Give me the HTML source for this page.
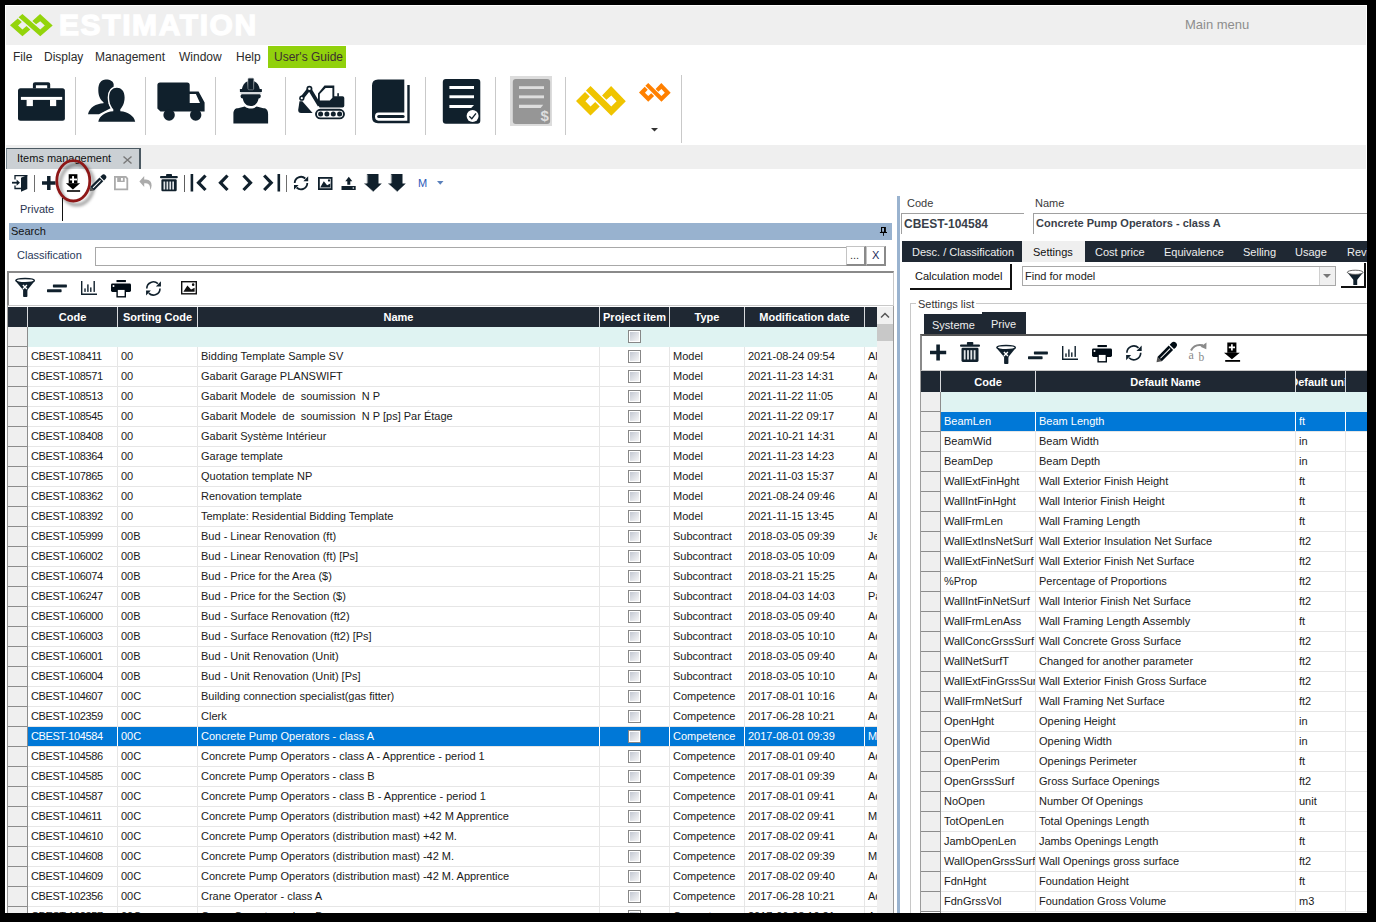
<!DOCTYPE html>
<html><head><meta charset="utf-8"><title>Estimation</title>
<style>
*{box-sizing:border-box;margin:0;padding:0}
html,body{width:1376px;height:922px;overflow:hidden;background:#000;font-family:"Liberation Sans", sans-serif;font-size:11px;color:#1a1a1a}
.ab{position:absolute}
.t{position:absolute;white-space:nowrap;line-height:1}
svg{position:absolute;overflow:visible}
.hd{position:absolute;background:#1f2833;color:#fff;font-weight:bold;font-size:11px}
.hc{position:absolute;top:0;height:100%;display:flex;justify-content:center;line-height:20px;overflow:hidden;white-space:nowrap;border-left:1px solid #d8dadd}
.row{position:absolute;height:20px;border-bottom:1px solid #e6e6e6;background:#fff}
.c{position:absolute;top:0;height:19px;line-height:19px;overflow:hidden;white-space:pre;padding-left:3px;border-left:1px solid #e6e6e6}
.rh{position:absolute;background:#efefef;border-bottom:1px solid #8c8c8c;border-right:1px solid #8c8c8c}
.sel{background:#0078d7;color:#fff}
.sel .c{border-left-color:#fff}
.cb{position:absolute;width:13px;height:13px;border:1px solid #878787;padding:1px;background:linear-gradient(135deg,#c4c9d3,#f6f6f6) content-box,#fff}
</style></head><body>

<div class="ab" style="left:5px;top:5px;width:1362px;height:908px;background:#fff"></div>
<div class="ab" style="left:6px;top:6px;width:1360px;height:39px;background:#efefef"></div>
<svg style="left:9.8px;top:14px" width="42.7" height="22.3" viewBox="55 50 1270 760" preserveAspectRatio="none"><path fill="#93d40b" d="M285 200L55 430L425 805L660 575L545 460L425 575L295 440L405 320Z M425 50L955 575L1090 440L955 295L830 400L720 290L950 50L1325 440L955 810L310 165Z"/></svg>
<div class="t" style="left:59px;top:10px;font-size:30px;font-weight:bold;color:#fff;letter-spacing:1.6px;-webkit-text-stroke:1.3px #fff">ESTIMATION</div>
<div class="t" style="left:1185px;top:18px;font-size:13px;color:#8d8d8d">Main menu</div>
<div class="t" style="left:13px;top:51px;font-size:12px;color:#2b2b2b">File</div>
<div class="t" style="left:44px;top:51px;font-size:12px;color:#2b2b2b">Display</div>
<div class="t" style="left:95px;top:51px;font-size:12px;color:#2b2b2b">Management</div>
<div class="t" style="left:179px;top:51px;font-size:12px;color:#2b2b2b">Window</div>
<div class="t" style="left:236px;top:51px;font-size:12px;color:#2b2b2b">Help</div>
<div class="ab" style="left:268px;top:46px;width:78px;height:22px;background:#91d10c"></div>
<div class="t" style="left:274px;top:51px;font-size:12px;color:#3d3030">User's Guide</div>
<div class="ab" style="left:75px;top:77px;width:1px;height:58px;background:#c9c9c9"></div>
<div class="ab" style="left:145px;top:77px;width:1px;height:58px;background:#c9c9c9"></div>
<div class="ab" style="left:215px;top:77px;width:1px;height:58px;background:#c9c9c9"></div>
<div class="ab" style="left:285px;top:77px;width:1px;height:58px;background:#c9c9c9"></div>
<div class="ab" style="left:355px;top:77px;width:1px;height:58px;background:#c9c9c9"></div>
<div class="ab" style="left:425px;top:77px;width:1px;height:58px;background:#c9c9c9"></div>
<div class="ab" style="left:495px;top:77px;width:1px;height:58px;background:#c9c9c9"></div>
<div class="ab" style="left:565px;top:77px;width:1px;height:58px;background:#c9c9c9"></div>
<div class="ab" style="left:681px;top:75px;width:1px;height:68px;background:#c9c9c9"></div>
<svg style="left:12px;top:76px" width="60" height="50" viewBox="0 0 60 50"><path fill="#10202c" d="M8.5 12.2H50.4Q52.9 12.2 52.9 14.7V42.2Q52.9 44.7 50.4 44.7H8.5Q6 44.7 6 42.2V14.7Q6 12.2 8.5 12.2Z"/>
<path fill="#10202c" fill-rule="evenodd" d="M23 6.2H36.2Q38.2 6.2 38.2 8.2V12.5H20.9V8.2Q20.9 6.2 23 6.2Z M23.9 9.2V12.5H35.2V9.2Z"/>
<rect x="8.9" y="20.9" width="41.3" height="3" fill="#fff"/>
<rect x="14.6" y="23.5" width="6.3" height="6.6" fill="#fff"/>
<rect x="38" y="23.5" width="6.2" height="6.6" fill="#fff"/></svg>
<svg style="left:82px;top:76px" width="60" height="50" viewBox="0 0 60 50"><path fill="#10202c" d="M23.8 3.5C28.5 3.5 31.5 5.5 31.7 8.5L31 22C29.5 24.5 28 26 26.5 26.8V27.3L29 32L17 38.2H6C7.5 31.5 14 27.7 21.5 27.3V26.2C18.5 24 16.3 20 16.3 14C16.3 7 19.3 3.5 23.8 3.5Z"/>
<g stroke="#fff" stroke-width="2.8" paint-order="stroke" fill="#10202c">
<path d="M34.85 11.7C39.4 11.7 42.6 15 42.6 21.5C42.6 27.5 40 31.5 38.3 33.2V35.2C46 35.8 52 39.5 53.2 45.8H16.3C17.5 39.5 23.5 35.8 31.3 35.2V33.2C29.6 31.5 27.1 27.5 27.1 21.5C27.1 15 30.3 11.7 34.85 11.7Z"/></g></svg>
<svg style="left:152px;top:76px" width="60" height="50" viewBox="0 0 60 50"><path fill="#10202c" fill-rule="evenodd" d="M8 6.5H35.2Q37.7 6.5 37.7 9V15.5H46.6L52.6 26.6V35.5H8.5L5.4 32.5V9Q5.4 6.5 8 6.5Z M37.7 17.9V27.1H48L43.9 17.9Z"/>
<circle cx="17.1" cy="39" r="5.7" fill="#10202c"/><circle cx="43.7" cy="39" r="5.7" fill="#10202c"/></svg>
<svg style="left:222px;top:76px" width="60" height="50" viewBox="0 0 60 50"><path fill="#10202c" d="M19.8 13.5C20.5 9.5 22.5 6.5 25.5 5.3L26 13.5H31.7L32.2 5.3C35.2 6.5 37.2 9.5 37.9 13.5Z"/>
<rect x="17.9" y="13" width="22" height="3" rx="0.5" fill="#10202c"/>
<rect x="26" y="2.2" width="5.7" height="11.6" rx="1" fill="#10202c" stroke="#8c9399" stroke-width="0.6"/>
<rect x="18.5" y="16.1" width="20.8" height="1.7" fill="#cfd3d6"/>
<path fill="#10202c" d="M19.8 18.2H37.6Q38.9 18.5 38.8 20.2Q38.6 22.4 36.6 22.6C35.8 27.4 32.8 30.1 28.7 30.1C24.6 30.1 21.6 27.4 20.8 22.6Q18.6 22.4 18.5 20.2Q18.6 18.5 19.8 18.2Z"/>
<path fill="#10202c" d="M11.4 47.5V38C11.4 34 13 32.4 16 32.3L22.8 30.6C24.5 32 26.5 32.6 28.7 32.6C30.9 32.6 32.9 32 34.6 30.6L41.4 32.3C44.4 32.4 46.1 34 46.1 38V47.5Z"/></svg>
<svg style="left:292px;top:76px" width="60" height="50" viewBox="0 0 60 50"><path fill="#10202c" fill-rule="evenodd" d="M32.5 9.5H42.3V20.2H50.5Q52.3 20.2 52.3 22V29.8Q52.3 31.5 50.5 31.5H27.5L26 28V17.4Z M33.6 11.9L27.8 17.9V24.4H37.8L40.4 21.7V11.9Z"/>
<rect x="45.3" y="17.2" width="1.6" height="3.5" fill="#10202c"/>
<path d="M27.5 29.5L17.4 12.7L9.8 22.2" stroke="#10202c" stroke-width="3.6" fill="none" stroke-linejoin="round"/>
<circle cx="17.4" cy="12.7" r="3" fill="#10202c"/><circle cx="17.4" cy="12.7" r="1.3" fill="#fff"/>
<circle cx="9.8" cy="22.2" r="2.6" fill="#10202c"/><circle cx="9.8" cy="22.2" r="1.1" fill="#fff"/>
<path fill="#10202c" d="M7.5 25.3H10.3L20.6 36.9H9Q6.2 36.9 6.2 34Z"/>
<rect x="24" y="33.8" width="28" height="8.6" rx="4.3" fill="none" stroke="#10202c" stroke-width="1.9"/>
<circle cx="28.6" cy="38.1" r="2.5" fill="#10202c"/><circle cx="34.9" cy="38.1" r="2.5" fill="#10202c"/><circle cx="41.3" cy="38.1" r="2.5" fill="#10202c"/><circle cx="47.6" cy="38.1" r="2.5" fill="#10202c"/></svg>
<svg style="left:362px;top:76px" width="60" height="50" viewBox="0 0 60 50"><path fill="#10202c" d="M16 3.5H42.3V36.4H16.5Q13 36.4 13 40.6Q13 44.7 16.5 44.7H45.3V8.9H47.7V47.2H16Q10 47.2 10 41V9.5Q10 3.5 16 3.5Z"/>
<rect x="15.2" y="39" width="27.4" height="3" rx="1.5" fill="#10202c"/></svg>
<svg style="left:432px;top:76px" width="60" height="50" viewBox="0 0 60 50"><rect x="10.8" y="3" width="37.5" height="44.7" rx="3" fill="#10202c"/>
<rect x="17.4" y="10" width="24.6" height="3" fill="#fff"/>
<rect x="17.4" y="19.3" width="24.6" height="2.9" fill="#fff"/>
<path d="M17.4 29H42L39.2 32H17.4Z" fill="#fff"/>
<circle cx="40.6" cy="40.1" r="6" fill="#fff"/>
<path d="M37.3 40.3L39.8 42.7L44 37.3" stroke="#10202c" stroke-width="1.3" fill="none"/></svg>
<div class="ab" style="left:510px;top:76px;width:42px;height:50px;background:#dcdcdc"></div>
<svg style="left:502px;top:72px" width="60" height="58" viewBox="0 0 60 58"><rect x="10.8" y="6.9" width="37.3" height="45" rx="3" fill="#969696"/>
<rect x="17" y="14.2" width="25" height="2.8" fill="#dedede"/>
<rect x="17" y="23.4" width="25" height="2.9" fill="#dedede"/>
<path d="M17 32.8H41.2L38.7 36H17Z" fill="#dedede"/>
<text x="38.5" y="48.5" font-family="Liberation Sans" font-size="15" font-weight="bold" fill="#dedede">$</text></svg>
<svg style="left:576.2px;top:86px" width="49.8" height="29.8" viewBox="55 50 1270 760" preserveAspectRatio="none"><path fill="#efc400" d="M285 200L55 430L425 805L660 575L545 460L425 575L295 440L405 320Z M425 50L955 575L1090 440L955 295L830 400L720 290L950 50L1325 440L955 810L310 165Z"/></svg>
<svg style="left:639.3px;top:82.5px" width="31.7" height="18.8" viewBox="55 50 1270 760" preserveAspectRatio="none"><path fill="#ff8000" d="M285 200L55 430L425 805L660 575L545 460L425 575L295 440L405 320Z M425 50L955 575L1090 440L955 295L830 400L720 290L950 50L1325 440L955 810L310 165Z"/></svg>
<svg style="left:651px;top:128px" width="8" height="4" viewBox="0 0 8 4"><path d="M0 0H7L3.5 3.5Z" fill="#333"/></svg>
<div class="ab" style="left:6px;top:145px;width:1360px;height:24px;background:#efefef"></div>
<div class="ab" style="left:6px;top:148px;width:135px;height:21px;background:#cbd0d4;border-top:1px solid #4b5962;border-right:2px solid #4b5962;border-left:1px solid #7c8a93"></div>
<div class="t" style="left:17px;top:153px;font-size:11px;color:#111">Items management</div>
<svg style="left:123px;top:156px" width="9" height="8" viewBox="0 0 9 8"><path d="M0.5 0.5L8.5 7.5M8.5 0.5L0.5 7.5" stroke="#787878" stroke-width="1.4"/></svg>
<svg style="left:8px;top:170px" width="24" height="26" viewBox="0 0 24 26"><path d="M7 9.5V5.6H19.3 M7 15.5V18.5H13" stroke="#10202c" stroke-width="1.3" fill="none"/>
<path d="M13 7.8L19.3 5.1V19.1L13 21.8Z" fill="#10202c"/>
<path d="M4 12.7H9.5" stroke="#10202c" stroke-width="1.8"/><path d="M8.6 9.6L12 12.7L8.6 15.8Z" fill="#10202c"/></svg>
<div class="ab" style="left:34px;top:175px;width:1px;height:17px;background:#6e6e6e"></div>
<svg style="left:42px;top:176px" width="14" height="14" viewBox="0 0 14 14"><path d="M0 7H13.6 M6.8 0V14.1" stroke="#10202c" stroke-width="3.5"/></svg>
<svg style="left:56px;top:170px" width="34" height="26" viewBox="0 0 34 26"><rect x="12.7" y="4.2" width="8.7" height="9.2" fill="#000"/>
<rect x="13.8" y="8.6" width="7.2" height="1.8" fill="#fff"/><rect x="16.1" y="6.1" width="1.9" height="6.9" fill="#fff"/>
<path d="M9.9 13.2H24.1L16.9 19.4Z" fill="#000"/>
<rect x="10.9" y="20.2" width="13.2" height="1.6" fill="#000"/></svg>
<svg style="left:50px;top:154px" width="50" height="56" viewBox="0 0 50 56"><defs><filter id="sh" x="-30%" y="-30%" width="160%" height="160%"><feGaussianBlur stdDeviation="1.6"/></filter></defs><ellipse cx="24.6" cy="28.3" rx="16.7" ry="20.3" fill="none" stroke="#000" stroke-opacity="0.35" stroke-width="3.5" filter="url(#sh)" transform="translate(2.2 2.2)"/><ellipse cx="23.3" cy="26.8" rx="16.5" ry="20.2" fill="none" stroke="#8e1717" stroke-width="2.8"/></svg>
<svg style="left:84px;top:170px" width="30" height="30" viewBox="0 0 30 30"><g transform="translate(5.599999999999994 21.19999999999999) rotate(-45)">
<path d="M0 0L3.6 -2.65V2.65Z" fill="#555"/>
<rect x="3.6" y="-2.65" width="13.049999999999999" height="5.3" fill="#10202c"/>
<rect x="4.8" y="-0.5" width="10.649999999999999" height="1" fill="#fff"/>
<path d="M17.775000000000002 -2.65H19.85A2.65 2.65 0 0 1 19.85 2.65H17.775000000000002Z" fill="#10202c"/>
</g></svg>
<svg style="left:113px;top:175px" width="17" height="17" viewBox="0 0 17 17"><path d="M1.9 1.9H12.7L14.3 3.5V14.3H1.9Z" fill="none" stroke="#ababab" stroke-width="1.8"/>
<rect x="4.2" y="1" width="7.5" height="6" fill="#ababab"/><rect x="8" y="3" width="1.9" height="2.7" fill="#fff"/></svg>
<svg style="left:139px;top:176px" width="14" height="14" viewBox="0 0 14 14"><path d="M5.2 3.5H7Q12.6 3.8 12.6 9.5Q12.4 12.2 11.2 14Q11.5 7.6 7 7.3H5.2V11L0.4 5.5L5.2 0Z" fill="#ababab"/></svg>
<svg style="left:160px;top:174px" width="18" height="18" viewBox="0 0 18 18"><rect x="0" y="2.1" width="17.8" height="2.2" rx="1" fill="#10202c"/>
<rect x="6.1" y="0" width="5.9" height="3" rx="0.8" fill="#10202c"/>
<rect x="1.4" y="5.3" width="15.3" height="12" rx="1.2" fill="#10202c"/>
<rect x="3.5" y="7.5" width="1.7" height="8" fill="#dfe3e6"/><rect x="6.5" y="7.5" width="1.7" height="8" fill="#dfe3e6"/><rect x="9.4" y="7.5" width="1.7" height="8" fill="#dfe3e6"/><rect x="12.3" y="7.5" width="1.7" height="8" fill="#dfe3e6"/></svg>
<div class="ab" style="left:184px;top:175px;width:1px;height:17px;background:#5e5e5e"></div>
<svg style="left:188px;top:172px" width="96" height="22" viewBox="0 0 96 22"><rect x="2.6" y="2" width="2.6" height="17.5" fill="#10202c"/>
<path d="M17.5 3.5L10.5 10.8L17.5 18" stroke="#10202c" stroke-width="3.2" fill="none"/>
<path d="M39.5 3.5L32.5 10.8L39.5 18" stroke="#10202c" stroke-width="3.2" fill="none"/>
<path d="M55.5 3.5L62.5 10.8L55.5 18" stroke="#10202c" stroke-width="3.2" fill="none"/>
<path d="M76.2 3.5L83.2 10.8L76.2 18" stroke="#10202c" stroke-width="3.2" fill="none"/>
<rect x="89.5" y="2" width="2.6" height="17.5" fill="#10202c"/></svg>
<div class="ab" style="left:286px;top:175px;width:1px;height:17px;background:#6e6e6e"></div>
<svg style="left:293.2px;top:175px" width="16.0" height="16.0" viewBox="0 0 16.0 16.0"><g transform="scale(1.0)"><path d="M1.7 8A6.3 6.3 0 0 1 12.3 3.5 M14.3 8A6.3 6.3 0 0 1 3.6 12.5" stroke="#10202c" stroke-width="1.8" fill="none"/>
<path d="M15.2 1.3V6.3H10.4Z" fill="#10202c"/><path d="M1 10H5.6L1 14.8Z" fill="#10202c"/></g></svg>
<svg style="left:318px;top:177px" width="14.5" height="13" viewBox="0 0 14.5 13"><rect x="0.9" y="0.9" width="12.7" height="11.2" fill="#fff" stroke="#10202c" stroke-width="1.8"/>
<path d="M2.175 10.4L5.800000000000001 4.29L9.135 8.19L12.325 6.5V10.4Z" fill="#10202c"/>
<circle cx="11.02" cy="3.5100000000000002" r="1.16" fill="#10202c"/></svg>
<svg style="left:341px;top:175px" width="16" height="16" viewBox="0 0 16 16"><path d="M4.3 6.2L7.8 1.8L11.3 6.2H9.3V9.8H6.3V6.2Z" fill="#10202c"/>
<rect x="0.5" y="11" width="14.2" height="4" fill="#10202c"/><circle cx="12.3" cy="13" r="0.8" fill="#fff"/></svg>
<svg style="left:364px;top:174px" width="20" height="20" viewBox="0 0 20 20"><path d="M2.9 0H14.5V9.4H17.8L9.1 17.8L0 9.4H2.9Z" fill="#10202c"/>
<path d="M3.6 0.5V9.3 M0.9 10.4L9 17.4" stroke="#fff" stroke-width="0.6" opacity="0.85"/></svg>
<svg style="left:388px;top:174px" width="20" height="20" viewBox="0 0 20 20"><path d="M2.9 0H14.5V9.4H17.8L9.1 17.8L0 9.4H2.9Z" fill="#10202c"/>
<path d="M3.6 0.5V9.3 M0.9 10.4L9 17.4" stroke="#fff" stroke-width="0.6" opacity="0.85"/></svg>
<div class="t" style="left:418px;top:178px;font-size:11px;color:#2c58b8">M</div>
<svg style="left:437px;top:181px" width="7" height="4" viewBox="0 0 7 4"><path d="M0 0H6.5L3.25 3.8Z" fill="#5a80bb"/></svg>
<div class="t" style="left:20px;top:204px;font-size:11px;color:#2a3550">Private</div>
<div class="ab" style="left:62px;top:198px;width:1px;height:23px;background:#111"></div>
<div class="ab" style="left:9px;top:223px;width:883px;height:17px;background:#98b2cf"></div>
<div class="t" style="left:11px;top:226px;font-size:11px;color:#111">Search</div>
<svg style="left:879px;top:226px" width="9" height="11" viewBox="0 0 9 11"><path d="M2 1H6.9V6.2H2Z M3.1 1.9V5.8H5V1.9Z" fill="#000" fill-rule="evenodd"/>
<rect x="0.9" y="6" width="7.1" height="1" fill="#000"/><rect x="4.1" y="6.8" width="0.9" height="3" fill="#000"/></svg>
<div class="t" style="left:17px;top:250px;font-size:11px;color:#2a3a5a">Classification</div>
<div class="ab" style="left:95px;top:247px;width:752px;height:19px;border:1px solid #a8a8a8;border-right:none;background:#fff"></div>
<div class="ab" style="left:846px;top:246px;width:20px;height:20px;border:1px solid #c4c4c4;border-right:2px solid #8a8a8a;border-bottom:2px solid #8a8a8a;background:#fff"></div>
<div class="t" style="left:850px;top:250px;font-size:11px;color:#333">...</div>
<div class="ab" style="left:866px;top:246px;width:20px;height:20px;border:1px solid #c4c4c4;border-right:2px solid #8a8a8a;border-bottom:2px solid #8a8a8a;background:#fff"></div>
<div class="t" style="left:872px;top:250px;font-size:11px;color:#1a2a5a">X</div>
<div class="ab" style="left:7px;top:271px;width:887px;height:35px;border:1px solid #c8c8c8;border-top:2px solid #8a8a8a;border-left:2px solid #8a8a8a"></div>
<svg style="left:15px;top:274px" width="22" height="22" viewBox="0 0 22 22"><path d="M5.1 6.6L13.1 16H17.4L25.1 6.6Z" fill="#10202c" transform="translate(-5 0)"/>
<ellipse cx="10.1" cy="6.6" rx="9.2" ry="2.1" fill="#fff" stroke="#10202c" stroke-width="1.4"/>
<rect x="8.1" y="15.5" width="4.3" height="7.5" rx="0.8" fill="#10202c"/>
<path d="M7.9 10.9L11.9 14.9 M11.9 10.9L7.9 14.9" stroke="#fff" stroke-width="1.4"/></svg>
<svg style="left:47px;top:278px" width="22" height="22" viewBox="0 0 22 22"><rect x="5.9" y="6.5" width="14" height="2.9" rx="0.6" fill="#10202c"/><rect x="0" y="11.3" width="14.6" height="2.9" rx="0.6" fill="#10202c"/></svg>
<svg style="left:81px;top:281px" width="18" height="16" viewBox="0 0 18 16"><path d="M0.7 0V13.2H16" stroke="#10202c" stroke-width="1.4" fill="none"/>
<rect x="3.3" y="7.4" width="1.4" height="3.5" fill="#10202c"/><rect x="6.2" y="3.4" width="1.4" height="7.5" fill="#10202c"/>
<rect x="9.1" y="6.4" width="1.4" height="4.5" fill="#10202c"/><rect x="12.5" y="0" width="1.4" height="10.9" fill="#10202c"/></svg>
<svg style="left:111px;top:279.5px" width="22" height="20" viewBox="0 0 22 20"><rect x="5.5" y="0" width="9.4" height="2.1" fill="#000b14"/>
<rect x="0" y="3.6" width="20" height="8.3" rx="1.4" fill="#000b14"/>
<circle cx="2.5" cy="6.1" r="1" fill="#fff"/>
<rect x="6.1" y="9.2" width="8.2" height="7.6" fill="#fff" stroke="#000b14" stroke-width="1.4"/></svg>
<svg style="left:144.5px;top:279.5px" width="16.8" height="16.8" viewBox="0 0 16.8 16.8"><g transform="scale(1.05)"><path d="M1.7 8A6.3 6.3 0 0 1 12.3 3.5 M14.3 8A6.3 6.3 0 0 1 3.6 12.5" stroke="#10202c" stroke-width="1.5" fill="none"/>
<path d="M15.2 1.3V6.3H10.4Z" fill="#10202c"/><path d="M1 10H5.6L1 14.8Z" fill="#10202c"/></g></svg>
<svg style="left:181px;top:281px" width="16" height="13.5" viewBox="0 0 16 13.5"><rect x="0.7" y="0.7" width="14.6" height="12.1" fill="#fff" stroke="#111" stroke-width="1.4"/>
<path d="M2.4 10.8L6.4 4.455L10.08 8.505L13.6 6.75V10.8Z" fill="#111"/>
<circle cx="12.16" cy="3.6450000000000005" r="1.28" fill="#111"/></svg>
<div class="ab" style="left:7px;top:306px;width:887px;height:607px;border-left:1px solid #9a9a9a;border-right:1px solid #9a9a9a"></div>
<div class="hd" style="left:8px;top:307px;width:869px;height:20px">
<div class="hc" style="left:19px;width:90px">Code</div>
<div class="hc" style="left:109px;width:80px">Sorting Code</div>
<div class="hc" style="left:189px;width:402px">Name</div>
<div class="hc" style="left:591px;width:70px">Project item</div>
<div class="hc" style="left:661px;width:75px">Type</div>
<div class="hc" style="left:736px;width:120px">Modification date</div>
<div class="hc" style="left:856px;width:13px"></div>
</div>
<div class="ab" style="left:27px;top:327px;width:850px;height:20px;background:#dff3f2"></div>
<div class="rh" style="left:8px;top:327px;width:20px;height:20px"></div>
<div class="cb" style="left:628px;top:330px"></div>
<div class="rh" style="left:8px;top:347px;width:20px;height:20px"></div>
<div class="row" style="left:27px;top:347px;width:850px">
<div class="c" style="left:0px;width:90px;letter-spacing:-0.4px">CBEST-108411</div>
<div class="c" style="left:90px;width:80px">00</div>
<div class="c" style="left:170px;width:402px">Bidding Template Sample SV</div>
<div class="c" style="left:572px;width:70px"></div>
<div class="c" style="left:642px;width:75px">Model</div>
<div class="c" style="left:717px;width:120px">2021-08-24 09:54</div>
<div class="c" style="left:837px;width:13px">Alain</div>
</div>
<div class="cb" style="left:628px;top:350px"></div>
<div class="rh" style="left:8px;top:367px;width:20px;height:20px"></div>
<div class="row" style="left:27px;top:367px;width:850px">
<div class="c" style="left:0px;width:90px;letter-spacing:-0.4px">CBEST-108571</div>
<div class="c" style="left:90px;width:80px">00</div>
<div class="c" style="left:170px;width:402px">Gabarit Garage PLANSWIFT</div>
<div class="c" style="left:572px;width:70px"></div>
<div class="c" style="left:642px;width:75px">Model</div>
<div class="c" style="left:717px;width:120px">2021-11-23 14:31</div>
<div class="c" style="left:837px;width:13px">Admin</div>
</div>
<div class="cb" style="left:628px;top:370px"></div>
<div class="rh" style="left:8px;top:387px;width:20px;height:20px"></div>
<div class="row" style="left:27px;top:387px;width:850px">
<div class="c" style="left:0px;width:90px;letter-spacing:-0.4px">CBEST-108513</div>
<div class="c" style="left:90px;width:80px">00</div>
<div class="c" style="left:170px;width:402px">Gabarit Modele  de  soumission  N P</div>
<div class="c" style="left:572px;width:70px"></div>
<div class="c" style="left:642px;width:75px">Model</div>
<div class="c" style="left:717px;width:120px">2021-11-22 11:05</div>
<div class="c" style="left:837px;width:13px">Alain</div>
</div>
<div class="cb" style="left:628px;top:390px"></div>
<div class="rh" style="left:8px;top:407px;width:20px;height:20px"></div>
<div class="row" style="left:27px;top:407px;width:850px">
<div class="c" style="left:0px;width:90px;letter-spacing:-0.4px">CBEST-108545</div>
<div class="c" style="left:90px;width:80px">00</div>
<div class="c" style="left:170px;width:402px">Gabarit Modele  de  soumission  N P [ps] Par Étage</div>
<div class="c" style="left:572px;width:70px"></div>
<div class="c" style="left:642px;width:75px">Model</div>
<div class="c" style="left:717px;width:120px">2021-11-22 09:17</div>
<div class="c" style="left:837px;width:13px">Alain</div>
</div>
<div class="cb" style="left:628px;top:410px"></div>
<div class="rh" style="left:8px;top:427px;width:20px;height:20px"></div>
<div class="row" style="left:27px;top:427px;width:850px">
<div class="c" style="left:0px;width:90px;letter-spacing:-0.4px">CBEST-108408</div>
<div class="c" style="left:90px;width:80px">00</div>
<div class="c" style="left:170px;width:402px">Gabarit Système Intérieur</div>
<div class="c" style="left:572px;width:70px"></div>
<div class="c" style="left:642px;width:75px">Model</div>
<div class="c" style="left:717px;width:120px">2021-10-21 14:31</div>
<div class="c" style="left:837px;width:13px">Alain</div>
</div>
<div class="cb" style="left:628px;top:430px"></div>
<div class="rh" style="left:8px;top:447px;width:20px;height:20px"></div>
<div class="row" style="left:27px;top:447px;width:850px">
<div class="c" style="left:0px;width:90px;letter-spacing:-0.4px">CBEST-108364</div>
<div class="c" style="left:90px;width:80px">00</div>
<div class="c" style="left:170px;width:402px">Garage template</div>
<div class="c" style="left:572px;width:70px"></div>
<div class="c" style="left:642px;width:75px">Model</div>
<div class="c" style="left:717px;width:120px">2021-11-23 14:23</div>
<div class="c" style="left:837px;width:13px">Alain</div>
</div>
<div class="cb" style="left:628px;top:450px"></div>
<div class="rh" style="left:8px;top:467px;width:20px;height:20px"></div>
<div class="row" style="left:27px;top:467px;width:850px">
<div class="c" style="left:0px;width:90px;letter-spacing:-0.4px">CBEST-107865</div>
<div class="c" style="left:90px;width:80px">00</div>
<div class="c" style="left:170px;width:402px">Quotation template NP</div>
<div class="c" style="left:572px;width:70px"></div>
<div class="c" style="left:642px;width:75px">Model</div>
<div class="c" style="left:717px;width:120px">2021-11-03 15:37</div>
<div class="c" style="left:837px;width:13px">Alain</div>
</div>
<div class="cb" style="left:628px;top:470px"></div>
<div class="rh" style="left:8px;top:487px;width:20px;height:20px"></div>
<div class="row" style="left:27px;top:487px;width:850px">
<div class="c" style="left:0px;width:90px;letter-spacing:-0.4px">CBEST-108362</div>
<div class="c" style="left:90px;width:80px">00</div>
<div class="c" style="left:170px;width:402px">Renovation template</div>
<div class="c" style="left:572px;width:70px"></div>
<div class="c" style="left:642px;width:75px">Model</div>
<div class="c" style="left:717px;width:120px">2021-08-24 09:46</div>
<div class="c" style="left:837px;width:13px">Alain</div>
</div>
<div class="cb" style="left:628px;top:490px"></div>
<div class="rh" style="left:8px;top:507px;width:20px;height:20px"></div>
<div class="row" style="left:27px;top:507px;width:850px">
<div class="c" style="left:0px;width:90px;letter-spacing:-0.4px">CBEST-108392</div>
<div class="c" style="left:90px;width:80px">00</div>
<div class="c" style="left:170px;width:402px">Template: Residential Bidding Template</div>
<div class="c" style="left:572px;width:70px"></div>
<div class="c" style="left:642px;width:75px">Model</div>
<div class="c" style="left:717px;width:120px">2021-11-15 13:45</div>
<div class="c" style="left:837px;width:13px">Alain</div>
</div>
<div class="cb" style="left:628px;top:510px"></div>
<div class="rh" style="left:8px;top:527px;width:20px;height:20px"></div>
<div class="row" style="left:27px;top:527px;width:850px">
<div class="c" style="left:0px;width:90px;letter-spacing:-0.4px">CBEST-105999</div>
<div class="c" style="left:90px;width:80px">00B</div>
<div class="c" style="left:170px;width:402px">Bud - Linear Renovation (ft)</div>
<div class="c" style="left:572px;width:70px"></div>
<div class="c" style="left:642px;width:75px">Subcontract</div>
<div class="c" style="left:717px;width:120px">2018-03-05 09:39</div>
<div class="c" style="left:837px;width:13px">Jean</div>
</div>
<div class="cb" style="left:628px;top:530px"></div>
<div class="rh" style="left:8px;top:547px;width:20px;height:20px"></div>
<div class="row" style="left:27px;top:547px;width:850px">
<div class="c" style="left:0px;width:90px;letter-spacing:-0.4px">CBEST-106002</div>
<div class="c" style="left:90px;width:80px">00B</div>
<div class="c" style="left:170px;width:402px">Bud - Linear Renovation (ft) [Ps]</div>
<div class="c" style="left:572px;width:70px"></div>
<div class="c" style="left:642px;width:75px">Subcontract</div>
<div class="c" style="left:717px;width:120px">2018-03-05 10:09</div>
<div class="c" style="left:837px;width:13px">Admin</div>
</div>
<div class="cb" style="left:628px;top:550px"></div>
<div class="rh" style="left:8px;top:567px;width:20px;height:20px"></div>
<div class="row" style="left:27px;top:567px;width:850px">
<div class="c" style="left:0px;width:90px;letter-spacing:-0.4px">CBEST-106074</div>
<div class="c" style="left:90px;width:80px">00B</div>
<div class="c" style="left:170px;width:402px">Bud - Price for the Area ($)</div>
<div class="c" style="left:572px;width:70px"></div>
<div class="c" style="left:642px;width:75px">Subcontract</div>
<div class="c" style="left:717px;width:120px">2018-03-21 15:25</div>
<div class="c" style="left:837px;width:13px">Admin</div>
</div>
<div class="cb" style="left:628px;top:570px"></div>
<div class="rh" style="left:8px;top:587px;width:20px;height:20px"></div>
<div class="row" style="left:27px;top:587px;width:850px">
<div class="c" style="left:0px;width:90px;letter-spacing:-0.4px">CBEST-106247</div>
<div class="c" style="left:90px;width:80px">00B</div>
<div class="c" style="left:170px;width:402px">Bud - Price for the Section ($)</div>
<div class="c" style="left:572px;width:70px"></div>
<div class="c" style="left:642px;width:75px">Subcontract</div>
<div class="c" style="left:717px;width:120px">2018-04-03 14:03</div>
<div class="c" style="left:837px;width:13px">Pat</div>
</div>
<div class="cb" style="left:628px;top:590px"></div>
<div class="rh" style="left:8px;top:607px;width:20px;height:20px"></div>
<div class="row" style="left:27px;top:607px;width:850px">
<div class="c" style="left:0px;width:90px;letter-spacing:-0.4px">CBEST-106000</div>
<div class="c" style="left:90px;width:80px">00B</div>
<div class="c" style="left:170px;width:402px">Bud - Surface Renovation (ft2)</div>
<div class="c" style="left:572px;width:70px"></div>
<div class="c" style="left:642px;width:75px">Subcontract</div>
<div class="c" style="left:717px;width:120px">2018-03-05 09:40</div>
<div class="c" style="left:837px;width:13px">Admin</div>
</div>
<div class="cb" style="left:628px;top:610px"></div>
<div class="rh" style="left:8px;top:627px;width:20px;height:20px"></div>
<div class="row" style="left:27px;top:627px;width:850px">
<div class="c" style="left:0px;width:90px;letter-spacing:-0.4px">CBEST-106003</div>
<div class="c" style="left:90px;width:80px">00B</div>
<div class="c" style="left:170px;width:402px">Bud - Surface Renovation (ft2) [Ps]</div>
<div class="c" style="left:572px;width:70px"></div>
<div class="c" style="left:642px;width:75px">Subcontract</div>
<div class="c" style="left:717px;width:120px">2018-03-05 10:10</div>
<div class="c" style="left:837px;width:13px">Admin</div>
</div>
<div class="cb" style="left:628px;top:630px"></div>
<div class="rh" style="left:8px;top:647px;width:20px;height:20px"></div>
<div class="row" style="left:27px;top:647px;width:850px">
<div class="c" style="left:0px;width:90px;letter-spacing:-0.4px">CBEST-106001</div>
<div class="c" style="left:90px;width:80px">00B</div>
<div class="c" style="left:170px;width:402px">Bud - Unit Renovation (Unit)</div>
<div class="c" style="left:572px;width:70px"></div>
<div class="c" style="left:642px;width:75px">Subcontract</div>
<div class="c" style="left:717px;width:120px">2018-03-05 09:40</div>
<div class="c" style="left:837px;width:13px">Admin</div>
</div>
<div class="cb" style="left:628px;top:650px"></div>
<div class="rh" style="left:8px;top:667px;width:20px;height:20px"></div>
<div class="row" style="left:27px;top:667px;width:850px">
<div class="c" style="left:0px;width:90px;letter-spacing:-0.4px">CBEST-106004</div>
<div class="c" style="left:90px;width:80px">00B</div>
<div class="c" style="left:170px;width:402px">Bud - Unit Renovation (Unit) [Ps]</div>
<div class="c" style="left:572px;width:70px"></div>
<div class="c" style="left:642px;width:75px">Subcontract</div>
<div class="c" style="left:717px;width:120px">2018-03-05 10:10</div>
<div class="c" style="left:837px;width:13px">Admin</div>
</div>
<div class="cb" style="left:628px;top:670px"></div>
<div class="rh" style="left:8px;top:687px;width:20px;height:20px"></div>
<div class="row" style="left:27px;top:687px;width:850px">
<div class="c" style="left:0px;width:90px;letter-spacing:-0.4px">CBEST-104607</div>
<div class="c" style="left:90px;width:80px">00C</div>
<div class="c" style="left:170px;width:402px">Building connection specialist(gas fitter)</div>
<div class="c" style="left:572px;width:70px"></div>
<div class="c" style="left:642px;width:75px">Competence</div>
<div class="c" style="left:717px;width:120px">2017-08-01 10:16</div>
<div class="c" style="left:837px;width:13px">Admin</div>
</div>
<div class="cb" style="left:628px;top:690px"></div>
<div class="rh" style="left:8px;top:707px;width:20px;height:20px"></div>
<div class="row" style="left:27px;top:707px;width:850px">
<div class="c" style="left:0px;width:90px;letter-spacing:-0.4px">CBEST-102359</div>
<div class="c" style="left:90px;width:80px">00C</div>
<div class="c" style="left:170px;width:402px">Clerk</div>
<div class="c" style="left:572px;width:70px"></div>
<div class="c" style="left:642px;width:75px">Competence</div>
<div class="c" style="left:717px;width:120px">2017-06-28 10:21</div>
<div class="c" style="left:837px;width:13px">Admin</div>
</div>
<div class="cb" style="left:628px;top:710px"></div>
<div class="rh" style="left:8px;top:727px;width:20px;height:20px"></div>
<div class="row sel" style="left:27px;top:727px;width:850px">
<div class="c" style="left:0px;width:90px;letter-spacing:-0.4px">CBEST-104584</div>
<div class="c" style="left:90px;width:80px">00C</div>
<div class="c" style="left:170px;width:402px">Concrete Pump Operators - class A</div>
<div class="c" style="left:572px;width:70px"></div>
<div class="c" style="left:642px;width:75px">Competence</div>
<div class="c" style="left:717px;width:120px">2017-08-01 09:39</div>
<div class="c" style="left:837px;width:13px">Marc</div>
</div>
<div class="cb" style="left:628px;top:730px"></div>
<div class="rh" style="left:8px;top:747px;width:20px;height:20px"></div>
<div class="row" style="left:27px;top:747px;width:850px">
<div class="c" style="left:0px;width:90px;letter-spacing:-0.4px">CBEST-104586</div>
<div class="c" style="left:90px;width:80px">00C</div>
<div class="c" style="left:170px;width:402px">Concrete Pump Operators - class A - Apprentice - period 1</div>
<div class="c" style="left:572px;width:70px"></div>
<div class="c" style="left:642px;width:75px">Competence</div>
<div class="c" style="left:717px;width:120px">2017-08-01 09:40</div>
<div class="c" style="left:837px;width:13px">Admin</div>
</div>
<div class="cb" style="left:628px;top:750px"></div>
<div class="rh" style="left:8px;top:767px;width:20px;height:20px"></div>
<div class="row" style="left:27px;top:767px;width:850px">
<div class="c" style="left:0px;width:90px;letter-spacing:-0.4px">CBEST-104585</div>
<div class="c" style="left:90px;width:80px">00C</div>
<div class="c" style="left:170px;width:402px">Concrete Pump Operators - class B</div>
<div class="c" style="left:572px;width:70px"></div>
<div class="c" style="left:642px;width:75px">Competence</div>
<div class="c" style="left:717px;width:120px">2017-08-01 09:39</div>
<div class="c" style="left:837px;width:13px">Admin</div>
</div>
<div class="cb" style="left:628px;top:770px"></div>
<div class="rh" style="left:8px;top:787px;width:20px;height:20px"></div>
<div class="row" style="left:27px;top:787px;width:850px">
<div class="c" style="left:0px;width:90px;letter-spacing:-0.4px">CBEST-104587</div>
<div class="c" style="left:90px;width:80px">00C</div>
<div class="c" style="left:170px;width:402px">Concrete Pump Operators - class B - Apprentice - period 1</div>
<div class="c" style="left:572px;width:70px"></div>
<div class="c" style="left:642px;width:75px">Competence</div>
<div class="c" style="left:717px;width:120px">2017-08-01 09:41</div>
<div class="c" style="left:837px;width:13px">Admin</div>
</div>
<div class="cb" style="left:628px;top:790px"></div>
<div class="rh" style="left:8px;top:807px;width:20px;height:20px"></div>
<div class="row" style="left:27px;top:807px;width:850px">
<div class="c" style="left:0px;width:90px;letter-spacing:-0.4px">CBEST-104611</div>
<div class="c" style="left:90px;width:80px">00C</div>
<div class="c" style="left:170px;width:402px">Concrete Pump Operators (distribution mast) +42 M Apprentice</div>
<div class="c" style="left:572px;width:70px"></div>
<div class="c" style="left:642px;width:75px">Competence</div>
<div class="c" style="left:717px;width:120px">2017-08-02 09:41</div>
<div class="c" style="left:837px;width:13px">Marc</div>
</div>
<div class="cb" style="left:628px;top:810px"></div>
<div class="rh" style="left:8px;top:827px;width:20px;height:20px"></div>
<div class="row" style="left:27px;top:827px;width:850px">
<div class="c" style="left:0px;width:90px;letter-spacing:-0.4px">CBEST-104610</div>
<div class="c" style="left:90px;width:80px">00C</div>
<div class="c" style="left:170px;width:402px">Concrete Pump Operators (distribution mast) +42 M.</div>
<div class="c" style="left:572px;width:70px"></div>
<div class="c" style="left:642px;width:75px">Competence</div>
<div class="c" style="left:717px;width:120px">2017-08-02 09:41</div>
<div class="c" style="left:837px;width:13px">Admin</div>
</div>
<div class="cb" style="left:628px;top:830px"></div>
<div class="rh" style="left:8px;top:847px;width:20px;height:20px"></div>
<div class="row" style="left:27px;top:847px;width:850px">
<div class="c" style="left:0px;width:90px;letter-spacing:-0.4px">CBEST-104608</div>
<div class="c" style="left:90px;width:80px">00C</div>
<div class="c" style="left:170px;width:402px">Concrete Pump Operators (distribution mast) -42 M.</div>
<div class="c" style="left:572px;width:70px"></div>
<div class="c" style="left:642px;width:75px">Competence</div>
<div class="c" style="left:717px;width:120px">2017-08-02 09:39</div>
<div class="c" style="left:837px;width:13px">Marc</div>
</div>
<div class="cb" style="left:628px;top:850px"></div>
<div class="rh" style="left:8px;top:867px;width:20px;height:20px"></div>
<div class="row" style="left:27px;top:867px;width:850px">
<div class="c" style="left:0px;width:90px;letter-spacing:-0.4px">CBEST-104609</div>
<div class="c" style="left:90px;width:80px">00C</div>
<div class="c" style="left:170px;width:402px">Concrete Pump Operators (distribution mast) -42 M. Apprentice</div>
<div class="c" style="left:572px;width:70px"></div>
<div class="c" style="left:642px;width:75px">Competence</div>
<div class="c" style="left:717px;width:120px">2017-08-02 09:40</div>
<div class="c" style="left:837px;width:13px">Admin</div>
</div>
<div class="cb" style="left:628px;top:870px"></div>
<div class="rh" style="left:8px;top:887px;width:20px;height:20px"></div>
<div class="row" style="left:27px;top:887px;width:850px">
<div class="c" style="left:0px;width:90px;letter-spacing:-0.4px">CBEST-102356</div>
<div class="c" style="left:90px;width:80px">00C</div>
<div class="c" style="left:170px;width:402px">Crane Operator - class A</div>
<div class="c" style="left:572px;width:70px"></div>
<div class="c" style="left:642px;width:75px">Competence</div>
<div class="c" style="left:717px;width:120px">2017-06-28 10:21</div>
<div class="c" style="left:837px;width:13px">Admin</div>
</div>
<div class="cb" style="left:628px;top:890px"></div>
<div class="rh" style="left:8px;top:907px;width:20px;height:20px"></div>
<div class="row" style="left:27px;top:907px;width:850px">
<div class="c" style="left:0px;width:90px;letter-spacing:-0.4px">CBEST-102357</div>
<div class="c" style="left:90px;width:80px">00C</div>
<div class="c" style="left:170px;width:402px">Crane Operator - class B</div>
<div class="c" style="left:572px;width:70px"></div>
<div class="c" style="left:642px;width:75px">Competence</div>
<div class="c" style="left:717px;width:120px">2017-06-28 10:21</div>
<div class="c" style="left:837px;width:13px">Admin</div>
</div>
<div class="cb" style="left:628px;top:910px"></div>
<div class="ab" style="left:27px;top:327px;width:1px;height:586px;background:#8c8c8c"></div>
<div class="ab" style="left:877px;top:307px;width:16px;height:606px;background:#f0f0f0"></div>
<svg style="left:880px;top:312px" width="10" height="7" viewBox="0 0 10 7"><path d="M1 5.5L5 1.5L9 5.5" stroke="#555" stroke-width="1.5" fill="none"/></svg>
<div class="ab" style="left:877px;top:324px;width:16px;height:17px;background:#c8c8c8"></div>
<div class="ab" style="left:897px;top:196px;width:3px;height:717px;background:#9ab3cf"></div>
<div class="t" style="left:907px;top:198px;font-size:11px;color:#3a3a3a">Code</div>
<div class="ab" style="left:901px;top:213px;width:123px;height:21px;border-top:1px solid #a0a0a0;border-left:1px solid #a0a0a0"></div>
<div class="t" style="left:904px;top:218px;font-size:12px;font-weight:bold;color:#3a3f4a">CBEST-104584</div>
<div class="t" style="left:1035px;top:198px;font-size:11px;color:#3a3a3a">Name</div>
<div class="ab" style="left:1033px;top:213px;width:334px;height:21px;border-top:1px solid #a0a0a0;border-left:1px solid #a0a0a0"></div>
<div class="t" style="left:1036px;top:218px;font-size:11px;font-weight:bold;color:#3a3f4a">Concrete Pump Operators - class A</div>
<div class="ab" style="left:902px;top:241px;width:465px;height:21px;background:#1f2833"></div>
<div class="ab" style="left:1022px;top:241px;width:63px;height:21px;background:#efefef"></div>
<div class="t" style="left:912px;top:247px;font-size:11px;color:#eee">Desc. / Classification</div>
<div class="t" style="left:1033px;top:247px;font-size:11px;color:#111">Settings</div>
<div class="t" style="left:1095px;top:247px;font-size:11px;color:#eee">Cost price</div>
<div class="t" style="left:1164px;top:247px;font-size:11px;color:#eee">Equivalence</div>
<div class="t" style="left:1243px;top:247px;font-size:11px;color:#eee">Selling</div>
<div class="t" style="left:1295px;top:247px;font-size:11px;color:#eee">Usage</div>
<div class="t" style="left:1347px;top:247px;font-size:11px;color:#eee">Revision</div>
<div class="ab" style="left:910px;top:264px;width:102px;height:26px;background:#fff;border-right:2px solid #111;border-bottom:2px solid #111"></div>
<div class="t" style="left:915px;top:271px;font-size:11px;color:#111">Calculation model</div>
<div class="ab" style="left:1022px;top:266px;width:314px;height:20px;border:1px solid #a8a8a8;background:#fff"></div>
<div class="ab" style="left:1319px;top:267px;width:16px;height:18px;background:#f0f0f0;border-left:1px solid #d0d0d0"></div>
<svg style="left:1323px;top:274px" width="8" height="4" viewBox="0 0 8 4"><path d="M0 0H8L4 4Z" fill="#777"/></svg>
<div class="t" style="left:1025px;top:271px;font-size:11px;color:#222">Find for model</div>
<div class="ab" style="left:1341px;top:263px;width:25px;height:25px;background:#fff;border-right:2px solid #111;border-bottom:2px solid #111"></div>
<svg style="left:1347px;top:269px" width="18" height="18" viewBox="0 0 18 18"><path d="M0.2 3.3L6.3 10.8H10.2L16.3 3.3Z" fill="#10202c"/>
<ellipse cx="8.2" cy="3.3" rx="7.9" ry="2.1" fill="#fff" stroke="#555" stroke-width="0.9"/>
<rect x="6.3" y="10" width="3.9" height="6" fill="#10202c"/></svg>
<div class="ab" style="left:910px;top:303px;width:460px;height:620px;border-top:1px solid #c8c8c8;border-left:1px solid #c8c8c8"></div>
<div class="ab" style="left:916px;top:299px;width:60px;height:10px;background:#fff"></div>
<div class="t" style="left:918px;top:299px;font-size:11px;color:#333">Settings list</div>
<div class="ab" style="left:924px;top:314px;width:58px;height:20px;background:#1f2833"></div>
<div class="ab" style="left:982px;top:312px;width:44px;height:22px;background:#1f2833"></div>
<div class="t" style="left:932px;top:320px;font-size:11px;color:#eee">Systeme</div>
<div class="t" style="left:991px;top:319px;font-size:11px;color:#eee">Prive</div>
<div class="ab" style="left:920px;top:334px;width:450px;height:37px;border-top:2px solid #555;border-left:2px solid #8a8a8a;border-bottom:1px solid #c8c8c8"></div>
<svg style="left:929px;top:343px" width="18" height="20" viewBox="0 0 18 20"><path d="M1 9.5H17.2 M9.1 1.4V17.6" stroke="#10202c" stroke-width="3.6"/></svg>
<svg style="left:960px;top:342px" width="21" height="21" viewBox="0 0 21 21"><rect x="0" y="2.4" width="20" height="2.3" rx="1" fill="#10202c"/>
<rect x="6.9" y="0" width="6.4" height="3" rx="0.8" fill="#10202c"/>
<rect x="1.5" y="5.7" width="17" height="14.2" rx="1.3" fill="#10202c"/>
<rect x="3.8" y="8.2" width="1.8" height="9.3" fill="#dfe3e6"/><rect x="7.1" y="8.2" width="1.8" height="9.3" fill="#dfe3e6"/><rect x="10.4" y="8.2" width="1.8" height="9.3" fill="#dfe3e6"/><rect x="13.7" y="8.2" width="1.8" height="9.3" fill="#dfe3e6"/></svg>
<svg style="left:996px;top:341px" width="22" height="22" viewBox="0 0 22 22"><path d="M5.1 6.6L13.1 16H17.4L25.1 6.6Z" fill="#10202c" transform="translate(-5 0)"/>
<ellipse cx="10.1" cy="6.6" rx="9.2" ry="2.1" fill="#fff" stroke="#10202c" stroke-width="1.4"/>
<rect x="8.1" y="15.5" width="4.3" height="7.5" rx="0.8" fill="#10202c"/>
<path d="M7.9 10.9L11.9 14.9 M11.9 10.9L7.9 14.9" stroke="#fff" stroke-width="1.4"/></svg>
<svg style="left:1028px;top:345px" width="22" height="22" viewBox="0 0 22 22"><rect x="5.9" y="6.5" width="14" height="2.9" rx="0.6" fill="#10202c"/><rect x="0" y="11.3" width="14.6" height="2.9" rx="0.6" fill="#10202c"/></svg>
<svg style="left:1062px;top:346px" width="18" height="16" viewBox="0 0 18 16"><path d="M0.7 0V13.2H16" stroke="#10202c" stroke-width="1.4" fill="none"/>
<rect x="3.3" y="7.4" width="1.4" height="3.5" fill="#10202c"/><rect x="6.2" y="3.4" width="1.4" height="7.5" fill="#10202c"/>
<rect x="9.1" y="6.4" width="1.4" height="4.5" fill="#10202c"/><rect x="12.5" y="0" width="1.4" height="10.9" fill="#10202c"/></svg>
<svg style="left:1092px;top:345px" width="22" height="20" viewBox="0 0 22 20"><rect x="5.5" y="0" width="9.4" height="2.1" fill="#000b14"/>
<rect x="0" y="3.6" width="20" height="8.3" rx="1.4" fill="#000b14"/>
<circle cx="2.5" cy="6.1" r="1" fill="#fff"/>
<rect x="6.1" y="9.2" width="8.2" height="7.6" fill="#fff" stroke="#000b14" stroke-width="1.4"/></svg>
<svg style="left:1125px;top:344px" width="17.6" height="17.6" viewBox="0 0 17.6 17.6"><g transform="scale(1.1)"><path d="M1.7 8A6.3 6.3 0 0 1 12.3 3.5 M14.3 8A6.3 6.3 0 0 1 3.6 12.5" stroke="#10202c" stroke-width="1.5" fill="none"/>
<path d="M15.2 1.3V6.3H10.4Z" fill="#10202c"/><path d="M1 10H5.6L1 14.8Z" fill="#10202c"/></g></svg>
<svg style="left:1150px;top:336px" width="30" height="30" viewBox="0 0 30 30"><g transform="translate(6.5 26.19999999999999) rotate(-45)">
<path d="M0 0L4.4 -3.1V3.1Z" fill="#555"/>
<rect x="4.4" y="-3.1" width="15.950000000000001" height="6.2" fill="#000b14"/>
<rect x="5.6000000000000005" y="-0.5" width="13.55" height="1" fill="#fff"/>
<path d="M21.725 -3.1H24.4A3.1 3.1 0 0 1 24.4 3.1H21.725Z" fill="#000b14"/>
</g></svg>
<svg style="left:1186px;top:340px" width="24" height="24" viewBox="0 0 24 24"><path d="M5 10.5Q8.5 3.5 17 5.3" stroke="#8a8a8a" stroke-width="2" fill="none"/>
<path d="M20.5 2.5L20.3 9.2L14.5 6.8Z" fill="#8a8a8a"/>
<text x="2.6" y="18.5" font-family="Liberation Serif" font-size="12" fill="#8a8a8a">a</text>
<text x="12.6" y="20.7" font-family="Liberation Serif" font-size="11.5" fill="#8a8a8a">b</text></svg>
<svg style="left:1224px;top:342px" width="17" height="21" viewBox="0 0 17 21"><rect x="3.3" y="0.5" width="9.1" height="10.2" fill="#000"/>
<path d="M7.9 2.2V8.4 M4.8 5.3H11" stroke="#fff" stroke-width="1.7"/>
<path d="M3.3 10.5H12.4V10.7H15.8L7.9 17.3L0 10.7H3.3Z" fill="#000"/>
<rect x="1.2" y="18" width="14.9" height="1.8" fill="#000"/></svg>
<div class="ab" style="left:920px;top:371px;width:1px;height:542px;background:#9a9a9a"></div>
<div class="hd" style="left:921px;top:371px;width:446px;height:21px">
<div class="hc" style="left:19px;width:95px;line-height:22px">Code</div>
<div class="hc" style="left:114px;width:260px;line-height:22px">Default Name</div>
<div class="hc" style="left:374px;width:50px;line-height:22px">Default unit</div>
<div class="hc" style="left:424px;width:22px;line-height:22px"></div>
</div>
<div class="ab" style="left:940px;top:392px;width:427px;height:20px;background:#dff3f2"></div>
<div class="rh" style="left:921px;top:392px;width:20px;height:20px"></div>
<div class="rh" style="left:921px;top:412px;width:20px;height:20px"></div>
<div class="row sel" style="left:940px;top:412px;width:427px">
<div class="c" style="left:0px;width:95px">BeamLen</div>
<div class="c" style="left:95px;width:260px">Beam Length</div>
<div class="c" style="left:355px;width:50px">ft</div>
<div class="c" style="left:405px;width:22px"></div>
</div>
<div class="rh" style="left:921px;top:432px;width:20px;height:20px"></div>
<div class="row" style="left:940px;top:432px;width:427px">
<div class="c" style="left:0px;width:95px">BeamWid</div>
<div class="c" style="left:95px;width:260px">Beam Width</div>
<div class="c" style="left:355px;width:50px">in</div>
<div class="c" style="left:405px;width:22px"></div>
</div>
<div class="rh" style="left:921px;top:452px;width:20px;height:20px"></div>
<div class="row" style="left:940px;top:452px;width:427px">
<div class="c" style="left:0px;width:95px">BeamDep</div>
<div class="c" style="left:95px;width:260px">Beam Depth</div>
<div class="c" style="left:355px;width:50px">in</div>
<div class="c" style="left:405px;width:22px"></div>
</div>
<div class="rh" style="left:921px;top:472px;width:20px;height:20px"></div>
<div class="row" style="left:940px;top:472px;width:427px">
<div class="c" style="left:0px;width:95px">WallExtFinHght</div>
<div class="c" style="left:95px;width:260px">Wall Exterior Finish Height</div>
<div class="c" style="left:355px;width:50px">ft</div>
<div class="c" style="left:405px;width:22px"></div>
</div>
<div class="rh" style="left:921px;top:492px;width:20px;height:20px"></div>
<div class="row" style="left:940px;top:492px;width:427px">
<div class="c" style="left:0px;width:95px">WallIntFinHght</div>
<div class="c" style="left:95px;width:260px">Wall Interior Finish Height</div>
<div class="c" style="left:355px;width:50px">ft</div>
<div class="c" style="left:405px;width:22px"></div>
</div>
<div class="rh" style="left:921px;top:512px;width:20px;height:20px"></div>
<div class="row" style="left:940px;top:512px;width:427px">
<div class="c" style="left:0px;width:95px">WallFrmLen</div>
<div class="c" style="left:95px;width:260px">Wall Framing Length</div>
<div class="c" style="left:355px;width:50px">ft</div>
<div class="c" style="left:405px;width:22px"></div>
</div>
<div class="rh" style="left:921px;top:532px;width:20px;height:20px"></div>
<div class="row" style="left:940px;top:532px;width:427px">
<div class="c" style="left:0px;width:95px">WallExtInsNetSurf</div>
<div class="c" style="left:95px;width:260px">Wall Exterior Insulation Net Surface</div>
<div class="c" style="left:355px;width:50px">ft2</div>
<div class="c" style="left:405px;width:22px"></div>
</div>
<div class="rh" style="left:921px;top:552px;width:20px;height:20px"></div>
<div class="row" style="left:940px;top:552px;width:427px">
<div class="c" style="left:0px;width:95px">WallExtFinNetSurf</div>
<div class="c" style="left:95px;width:260px">Wall Exterior Finish Net Surface</div>
<div class="c" style="left:355px;width:50px">ft2</div>
<div class="c" style="left:405px;width:22px"></div>
</div>
<div class="rh" style="left:921px;top:572px;width:20px;height:20px"></div>
<div class="row" style="left:940px;top:572px;width:427px">
<div class="c" style="left:0px;width:95px">%Prop</div>
<div class="c" style="left:95px;width:260px">Percentage of Proportions</div>
<div class="c" style="left:355px;width:50px">ft2</div>
<div class="c" style="left:405px;width:22px"></div>
</div>
<div class="rh" style="left:921px;top:592px;width:20px;height:20px"></div>
<div class="row" style="left:940px;top:592px;width:427px">
<div class="c" style="left:0px;width:95px">WallIntFinNetSurf</div>
<div class="c" style="left:95px;width:260px">Wall Interior Finish Net Surface</div>
<div class="c" style="left:355px;width:50px">ft2</div>
<div class="c" style="left:405px;width:22px"></div>
</div>
<div class="rh" style="left:921px;top:612px;width:20px;height:20px"></div>
<div class="row" style="left:940px;top:612px;width:427px">
<div class="c" style="left:0px;width:95px">WallFrmLenAss</div>
<div class="c" style="left:95px;width:260px">Wall Framing Length Assembly</div>
<div class="c" style="left:355px;width:50px">ft</div>
<div class="c" style="left:405px;width:22px"></div>
</div>
<div class="rh" style="left:921px;top:632px;width:20px;height:20px"></div>
<div class="row" style="left:940px;top:632px;width:427px">
<div class="c" style="left:0px;width:95px">WallConcGrssSurf</div>
<div class="c" style="left:95px;width:260px">Wall Concrete Gross Surface</div>
<div class="c" style="left:355px;width:50px">ft2</div>
<div class="c" style="left:405px;width:22px"></div>
</div>
<div class="rh" style="left:921px;top:652px;width:20px;height:20px"></div>
<div class="row" style="left:940px;top:652px;width:427px">
<div class="c" style="left:0px;width:95px">WallNetSurfT</div>
<div class="c" style="left:95px;width:260px">Changed for another parameter</div>
<div class="c" style="left:355px;width:50px">ft2</div>
<div class="c" style="left:405px;width:22px"></div>
</div>
<div class="rh" style="left:921px;top:672px;width:20px;height:20px"></div>
<div class="row" style="left:940px;top:672px;width:427px">
<div class="c" style="left:0px;width:95px">WallExtFinGrssSurf</div>
<div class="c" style="left:95px;width:260px">Wall Exterior Finish Gross Surface</div>
<div class="c" style="left:355px;width:50px">ft2</div>
<div class="c" style="left:405px;width:22px"></div>
</div>
<div class="rh" style="left:921px;top:692px;width:20px;height:20px"></div>
<div class="row" style="left:940px;top:692px;width:427px">
<div class="c" style="left:0px;width:95px">WallFrmNetSurf</div>
<div class="c" style="left:95px;width:260px">Wall Framing Net Surface</div>
<div class="c" style="left:355px;width:50px">ft2</div>
<div class="c" style="left:405px;width:22px"></div>
</div>
<div class="rh" style="left:921px;top:712px;width:20px;height:20px"></div>
<div class="row" style="left:940px;top:712px;width:427px">
<div class="c" style="left:0px;width:95px">OpenHght</div>
<div class="c" style="left:95px;width:260px">Opening Height</div>
<div class="c" style="left:355px;width:50px">in</div>
<div class="c" style="left:405px;width:22px"></div>
</div>
<div class="rh" style="left:921px;top:732px;width:20px;height:20px"></div>
<div class="row" style="left:940px;top:732px;width:427px">
<div class="c" style="left:0px;width:95px">OpenWid</div>
<div class="c" style="left:95px;width:260px">Opening Width</div>
<div class="c" style="left:355px;width:50px">in</div>
<div class="c" style="left:405px;width:22px"></div>
</div>
<div class="rh" style="left:921px;top:752px;width:20px;height:20px"></div>
<div class="row" style="left:940px;top:752px;width:427px">
<div class="c" style="left:0px;width:95px">OpenPerim</div>
<div class="c" style="left:95px;width:260px">Openings Perimeter</div>
<div class="c" style="left:355px;width:50px">ft</div>
<div class="c" style="left:405px;width:22px"></div>
</div>
<div class="rh" style="left:921px;top:772px;width:20px;height:20px"></div>
<div class="row" style="left:940px;top:772px;width:427px">
<div class="c" style="left:0px;width:95px">OpenGrssSurf</div>
<div class="c" style="left:95px;width:260px">Gross Surface Openings</div>
<div class="c" style="left:355px;width:50px">ft2</div>
<div class="c" style="left:405px;width:22px"></div>
</div>
<div class="rh" style="left:921px;top:792px;width:20px;height:20px"></div>
<div class="row" style="left:940px;top:792px;width:427px">
<div class="c" style="left:0px;width:95px">NoOpen</div>
<div class="c" style="left:95px;width:260px">Number Of Openings</div>
<div class="c" style="left:355px;width:50px">unit</div>
<div class="c" style="left:405px;width:22px"></div>
</div>
<div class="rh" style="left:921px;top:812px;width:20px;height:20px"></div>
<div class="row" style="left:940px;top:812px;width:427px">
<div class="c" style="left:0px;width:95px">TotOpenLen</div>
<div class="c" style="left:95px;width:260px">Total Openings Length</div>
<div class="c" style="left:355px;width:50px">ft</div>
<div class="c" style="left:405px;width:22px"></div>
</div>
<div class="rh" style="left:921px;top:832px;width:20px;height:20px"></div>
<div class="row" style="left:940px;top:832px;width:427px">
<div class="c" style="left:0px;width:95px">JambOpenLen</div>
<div class="c" style="left:95px;width:260px">Jambs Openings Length</div>
<div class="c" style="left:355px;width:50px">ft</div>
<div class="c" style="left:405px;width:22px"></div>
</div>
<div class="rh" style="left:921px;top:852px;width:20px;height:20px"></div>
<div class="row" style="left:940px;top:852px;width:427px">
<div class="c" style="left:0px;width:95px">WallOpenGrssSurf</div>
<div class="c" style="left:95px;width:260px">Wall Openings gross surface</div>
<div class="c" style="left:355px;width:50px">ft2</div>
<div class="c" style="left:405px;width:22px"></div>
</div>
<div class="rh" style="left:921px;top:872px;width:20px;height:20px"></div>
<div class="row" style="left:940px;top:872px;width:427px">
<div class="c" style="left:0px;width:95px">FdnHght</div>
<div class="c" style="left:95px;width:260px">Foundation Height</div>
<div class="c" style="left:355px;width:50px">ft</div>
<div class="c" style="left:405px;width:22px"></div>
</div>
<div class="rh" style="left:921px;top:892px;width:20px;height:20px"></div>
<div class="row" style="left:940px;top:892px;width:427px">
<div class="c" style="left:0px;width:95px">FdnGrssVol</div>
<div class="c" style="left:95px;width:260px">Foundation Gross Volume</div>
<div class="c" style="left:355px;width:50px">m3</div>
<div class="c" style="left:405px;width:22px"></div>
</div>
<div class="ab" style="left:940px;top:392px;width:1px;height:521px;background:#8c8c8c"></div>
<div class="ab" style="left:0;top:0;width:1376px;height:5px;background:#000"></div>
<div class="ab" style="left:0;top:913px;width:1376px;height:9px;background:#000"></div>
<div class="ab" style="left:0;top:0;width:5px;height:922px;background:#000"></div>
<div class="ab" style="left:1367px;top:0;width:9px;height:922px;background:#000"></div>
</body></html>
